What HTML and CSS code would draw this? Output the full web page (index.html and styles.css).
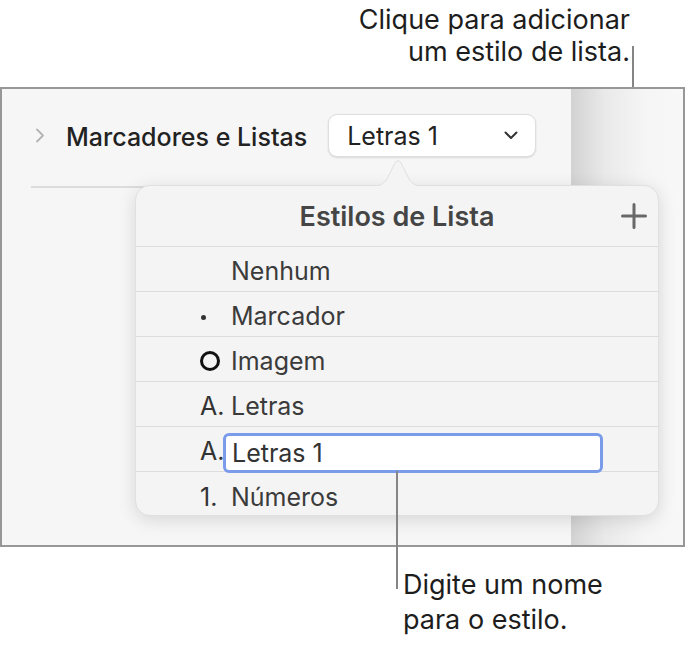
FILE: index.html
```html
<!DOCTYPE html>
<html lang="pt">
<head>
  <meta charset="UTF-8">
  <meta name="viewport" content="width=device-width, initial-scale=1.0">
  <title>Estilos de Lista</title>
  <link rel="stylesheet" href="styles.css">
</head>
<body>
  <div class="page">
    <div class="callout callout-top">
      <p>Clique para adicionar<br>um estilo de lista.</p>
    </div>
    <span class="leader leader-top"></span>

    <div class="frame">
      <div class="sidebar">
        <div class="section-row">
          <svg class="disclosure" width="10" height="15" viewBox="0 0 10 15">
            <path d="M2 1.5 L8 7.5 L2 13.5" fill="none" stroke="#b3b3b3" stroke-width="1.8" stroke-linecap="round" stroke-linejoin="round"/>
          </svg>
          <span class="section-title">Marcadores e Listas</span>
          <button class="popup-btn" type="button">
            <span>Letras 1</span>
            <svg width="14" height="9" viewBox="0 0 14 9">
              <path d="M1.5 1.5 L7 7 L12.5 1.5" fill="none" stroke="#333" stroke-width="2" stroke-linecap="round" stroke-linejoin="round"/>
            </svg>
          </button>
        </div>
        <div class="section-line"></div>
      </div>
      <div class="strip"></div>

      <div class="popover">
        <svg class="popover-arrow" width="60" height="28" viewBox="0 0 60 28">
          <path d="M0 27.5 C11 27.5 15 26 19 20 L27 4 C28.5 1.2 31.5 1.2 33 4 L41 20 C45 26 49 27.5 60 27.5 Z" fill="#f4f4f4" stroke="#e0e0e0" stroke-width="1"/>
          <rect x="0" y="27" width="60" height="2" fill="#f4f4f4"/>
        </svg>
        <div class="popover-head">
          <h2>Estilos de Lista</h2>
          <svg class="add-btn" width="26" height="26" viewBox="0 0 26 26">
            <path d="M13 1.5 V24.5 M1.5 13 H24.5" stroke="#686868" stroke-width="3" stroke-linecap="round"/>
          </svg>
        </div>
        <ul class="style-list">
          <li><span class="marker"></span><span class="name">Nenhum</span></li>
          <li><span class="marker"><span class="dot"></span></span><span class="name">Marcador</span></li>
          <li><span class="marker"><span class="ring"></span></span><span class="name">Imagem</span></li>
          <li><span class="marker">A.</span><span class="name">Letras</span></li>
          <li><span class="marker">A.</span><input class="name-field" type="text" value="Letras 1"></li>
          <li><span class="marker">1.</span><span class="name">Números</span></li>
        </ul>
      </div>
    </div>

    <span class="leader leader-bottom"></span>
    <div class="callout callout-bottom">
      <p>Digite um nome<br>para o estilo.</p>
    </div>
  </div>
</body>
</html>
```

FILE: styles.css
```css
* {
  box-sizing: border-box;
  margin: 0;
  padding: 0;
}

body {
  background: #fff;
  font-family: 'Inter', 'Liberation Sans', sans-serif;
  color: #1c1c1c;
}

.page {
  position: relative;
  width: 686px;
  height: 646px;
}

.callout {
  font-size: 27px;
  line-height: 32px;
  color: #1d1d1d;
}

.callout-top {
  height: 87px;
  padding: 4px 56px 0 0;
  text-align: right;
}

.callout-bottom {
  padding: 20px 0 0 403px;
  line-height: 35px;
}

.leader {
  position: absolute;
  width: 2px;
  background: #858585;
}

.leader-top {
  left: 632px;
  top: 46px;
  height: 151px;
}

.leader-bottom {
  left: 396px;
  top: 471px;
  height: 118px;
}

/* inspector frame */
.frame {
  position: relative;
  display: flex;
  width: 685px;
  height: 460px;
  border: 2px solid #979797;
  background: #f6f6f6;
}

.sidebar {
  flex: 1;
  padding: 24px 0 0 29px;
}

.strip {
  width: 112px;
  background: linear-gradient(to right, #d2d2d2, #e9e9e9 30%, #f5f5f5 65%, #f8f8f8);
}

.section-row {
  display: flex;
  align-items: center;
  height: 45px;
}

.disclosure {
  margin: 0 21px 0 4px;
}

.section-title {
  padding-top: 2px;
  font-size: 25px;
  font-weight: 500;
  color: #222;
}

.popup-btn {
  display: flex;
  align-items: center;
  justify-content: space-between;
  width: 208px;
  height: 43px;
  margin-left: 21px;
  padding: 0 17px 0 18px;
  border: 0.5px solid #dedede;
  border-radius: 9px;
  background: #fff;
  box-shadow: 0 1px 2px rgba(0, 0, 0, 0.12);
  font-family: inherit;
  font-size: 25px;
  color: #222;
}

.section-line {
  height: 1.5px;
  margin-top: 28px;
  background: #dcdcdc;
}

/* popover */
.popover {
  position: absolute;
  left: 133px;
  top: 96px;
  width: 524px;
  height: 331px;
  border-radius: 15px;
  background: #f4f4f4;
  border: 0.5px solid #e0e0e0;
  box-shadow: 0 4px 18px rgba(0, 0, 0, 0.13);
}

.popover-arrow {
  position: absolute;
  left: 232px;
  top: -27px;
}

.popover-head {
  position: relative;
  display: flex;
  align-items: center;
  justify-content: center;
  height: 61px;
  border-bottom: 1.5px solid #dcdcdc;
}

.popover-head h2 {
  font-size: 27px;
  font-weight: 600;
  color: #454545;
}

.add-btn {
  position: absolute;
  right: 11px;
  top: 17px;
}

.style-list {
  list-style: none;
}

.style-list li {
  display: flex;
  align-items: center;
  height: 45px;
  padding: 4px 0 0 64px;
  border-bottom: 1.5px solid #dcdcdc;
  font-size: 25px;
  color: #3b3b3b;
}

.style-list li:last-child {
  border-bottom: none;
}

.marker {
  display: flex;
  align-items: center;
  width: 31px;
  color: #333;
}

.dot {
  width: 5px;
  height: 5px;
  margin: 2px 0 0 1px;
  border-radius: 50%;
  background: #333;
}

.ring {
  width: 20px;
  height: 20px;
  border: 3px solid #111;
  border-radius: 50%;
}

.name-field {
  width: 380px;
  height: 40px;
  margin: 4px 0 0 -8px;
  padding: 0 0 0 6px;
  border: 3.5px solid #7a9bea;
  border-radius: 6px;
  outline: none;
  background: #fff;
  font-family: inherit;
  font-size: 25px;
  color: #333;
}
```
